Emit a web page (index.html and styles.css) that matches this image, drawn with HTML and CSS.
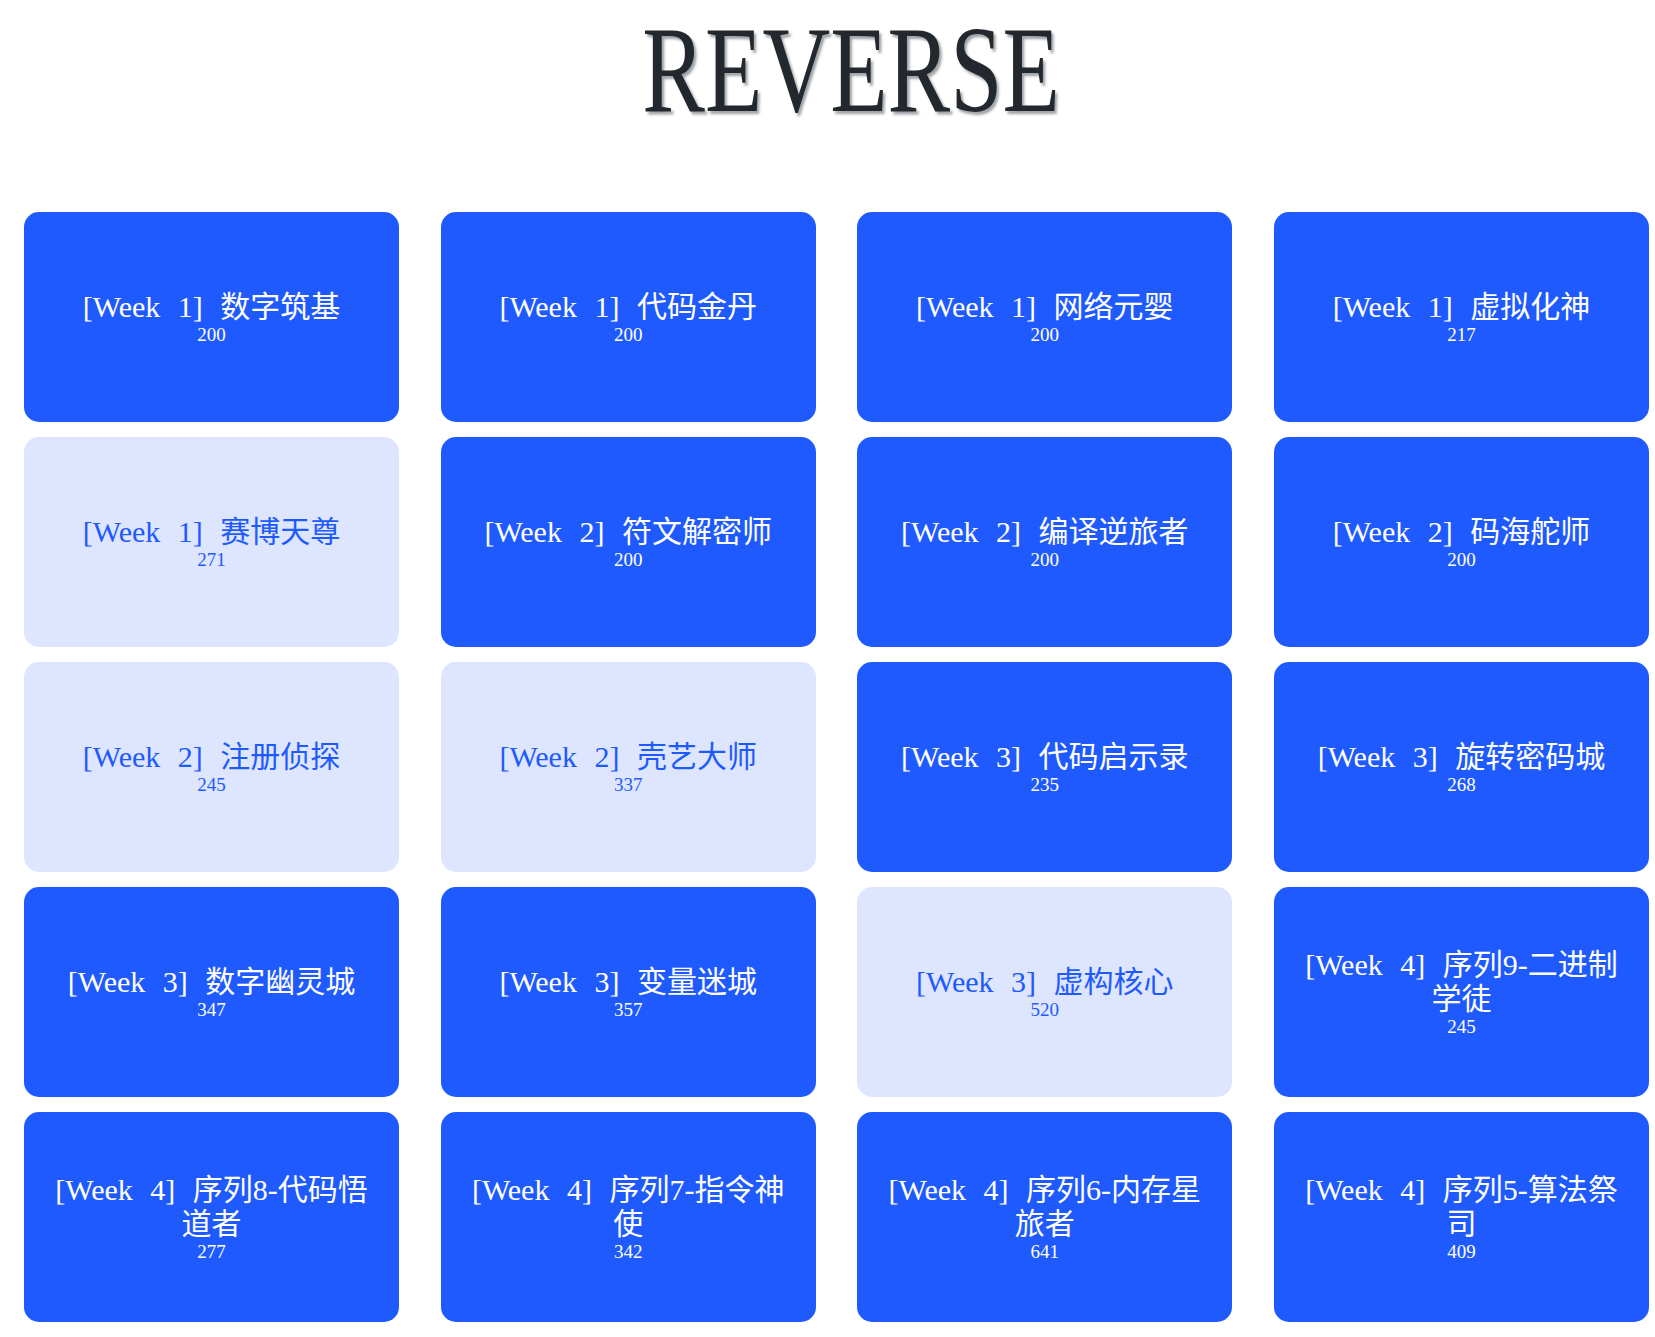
FILE: index.html
```html
<!DOCTYPE html>
<html lang="zh-CN">
<head>
<meta charset="utf-8">
<title>REVERSE</title>
<link rel="stylesheet" href="styles.css">
</head>
<body>
<header class="masthead">
  <h1 class="brand"><span class="brand-text">REVERSE</span></h1>
</header>
<main class="board">
  <div class="tile"><div class="tile-name">[Week 1] 数字筑基</div><div class="tile-score">200</div></div>
  <div class="tile"><div class="tile-name">[Week 1] 代码金丹</div><div class="tile-score">200</div></div>
  <div class="tile"><div class="tile-name">[Week 1] 网络元婴</div><div class="tile-score">200</div></div>
  <div class="tile"><div class="tile-name">[Week 1] 虚拟化神</div><div class="tile-score">217</div></div>

  <div class="tile tile-solved"><div class="tile-name">[Week 1] 赛博天尊</div><div class="tile-score">271</div></div>
  <div class="tile"><div class="tile-name">[Week 2] 符文解密师</div><div class="tile-score">200</div></div>
  <div class="tile"><div class="tile-name">[Week 2] 编译逆旅者</div><div class="tile-score">200</div></div>
  <div class="tile"><div class="tile-name">[Week 2] 码海舵师</div><div class="tile-score">200</div></div>

  <div class="tile tile-solved"><div class="tile-name">[Week 2] 注册侦探</div><div class="tile-score">245</div></div>
  <div class="tile tile-solved"><div class="tile-name">[Week 2] 壳艺大师</div><div class="tile-score">337</div></div>
  <div class="tile"><div class="tile-name">[Week 3] 代码启示录</div><div class="tile-score">235</div></div>
  <div class="tile"><div class="tile-name">[Week 3] 旋转密码城</div><div class="tile-score">268</div></div>

  <div class="tile"><div class="tile-name">[Week 3] 数字幽灵城</div><div class="tile-score">347</div></div>
  <div class="tile"><div class="tile-name">[Week 3] 变量迷城</div><div class="tile-score">357</div></div>
  <div class="tile tile-solved"><div class="tile-name">[Week 3] 虚构核心</div><div class="tile-score">520</div></div>
  <div class="tile"><div class="tile-name">[Week 4] 序列9-二进制学徒</div><div class="tile-score">245</div></div>

  <div class="tile"><div class="tile-name">[Week 4] 序列8-代码悟道者</div><div class="tile-score">277</div></div>
  <div class="tile"><div class="tile-name">[Week 4] 序列7-指令神使</div><div class="tile-score">342</div></div>
  <div class="tile"><div class="tile-name">[Week 4] 序列6-内存星旅者</div><div class="tile-score">641</div></div>
  <div class="tile"><div class="tile-name">[Week 4] 序列5-算法祭司</div><div class="tile-score">409</div></div>
</main>
</body>
</html>
```

FILE: styles.css
```css
html, body {
  margin: 0;
  padding: 0;
  background: #ffffff;
}

body {
  font-family: "Liberation Serif", "Noto Sans CJK SC", serif;
  overflow: hidden;
}

.masthead {
  display: flex;
  justify-content: center;
  padding-left: 48px;
}

.brand {
  margin: 0;
  font-family: "Liberation Serif", serif;
  font-weight: normal;
  font-size: 122px;
  line-height: normal;
  color: #23282e;
  text-shadow: 3px 3px 3px rgba(40, 50, 60, 0.45);
}

.brand-text {
  display: inline-block;
  transform: scaleX(0.77);
  transform-origin: center;
}

.board {
  display: grid;
  grid-template-columns: repeat(4, 375px);
  column-gap: 41.67px;
  row-gap: 15px;
  margin: 72px 0 0 24px;
}

.tile {
  height: 210px;
  box-sizing: border-box;
  border-radius: 15px;
  background: #1f5aff;
  color: #ffffff;
  display: flex;
  flex-direction: column;
  justify-content: center;
  align-items: center;
  text-align: center;
  padding: 0 20px;
}

.tile-solved {
  background: #dde6fe;
  color: #1f5aff;
}

.tile-name {
  font-size: 30px;
  line-height: 34px;
  word-spacing: 10px;
}

.tile-score {
  font-size: 19px;
  line-height: 21px;
}
```
